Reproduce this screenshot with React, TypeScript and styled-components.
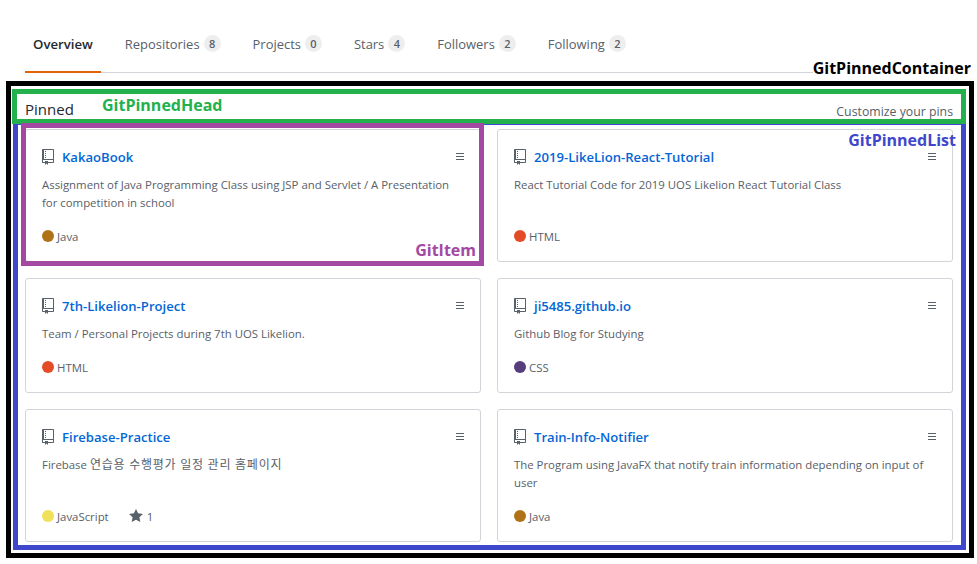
import React from 'react';
import styled, { createGlobalStyle } from 'styled-components';

const GlobalStyle = createGlobalStyle`
  html, body {
    margin: 0;
    background: #fff;
    font-family: "Open Sans", "Noto Sans CJK KR", sans-serif;
    color: #24292e;
  }
  * {
    box-sizing: border-box;
  }
`;

const Page = styled.div`
  width: 977px;
  height: 564px;
  overflow: hidden;
  padding-top: 17px;
`;

const Tabs = styled.nav`
  display: flex;
  margin: 0 24px 0 25px;
  height: 56px;
  border-bottom: 1px solid #d1d5da;
`;

const Tab = styled.a<{ $active?: boolean }>`
  display: flex;
  align-items: center;
  gap: 4px;
  height: 56px;
  padding: 0 8px 1px;
  margin-right: 16px;
  font-size: ${props => (props.$active ? '13.2px' : '12.95px')};
  font-weight: ${props => (props.$active ? 600 : 400)};
  color: ${props => (props.$active ? '#24292e' : '#586069')};
  border-bottom: 2px solid ${props => (props.$active ? '#e36209' : 'transparent')};
`;

const Counter = styled.span`
  min-width: 17px;
  height: 17px;
  padding: 0 5px;
  border-radius: 9px;
  background: #eeeeee;
  font-size: 11px;
  font-weight: 600;
  line-height: 17px;
  text-align: center;
  color: #586069;
`;

const GitPinnedContainer = styled.section`
  position: relative;
  width: 968px;
  height: 477px;
  margin: 8px 0 0 6px;
  padding: 3px 3px 3px 1px;
  border: 5px solid #000;
`;

const GitPinnedHead = styled.header`
  position: relative;
  display: flex;
  align-items: flex-end;
  justify-content: space-between;
  height: 35px;
  padding: 0 8px 0 8px;
  border: 5px solid #22b14c;
`;

const HeadTitle = styled.h2`
  margin: 0;
  font-size: 15px;
  font-weight: 400;
  line-height: 20px;
  color: #24292e;
`;

const CustomizeLink = styled.a`
  font-size: 12.3px;
  line-height: 14px;
  color: #586069;
`;

const GitPinnedList = styled.div`
  position: relative;
  display: grid;
  grid-template-columns: 456px 456px;
  gap: 16px;
  align-content: start;
  margin-left: 1px;
  height: 426px;
  padding: 4px 8px 0 7px;
  border: 5px solid #3f48cc;
  border-top-width: 1px;
`;

const GitItem = styled.article`
  position: relative;
  display: flex;
  flex-direction: column;
  padding: 17px 16px 16px;
  background: #fff;
  border: 1px solid #d1d5da;
  border-radius: 3px;
`;

const ItemHead = styled.div`
  display: flex;
  align-items: center;
  height: 20px;
`;

const RepoIcon = styled.svg`
  width: 12px;
  height: 16px;
  margin-right: 8px;
  fill: #586069;
`;

const RepoName = styled.a`
  flex: 1;
  font-size: 13.1px;
  font-weight: 600;
  color: #0366d6;
`;

const Grabber = styled.svg`
  width: 8px;
  height: 16px;
  fill: #586069;
`;

const Description = styled.p`
  margin: 9px 0 15px;
  font-size: 11.4px;
  line-height: 18px;
  color: #586069;
`;

const Hangul = styled.span`
  font-size: 12px;
  letter-spacing: 0.75px;
`;

const Meta = styled.div`
  display: flex;
  align-items: center;
  height: 18px;
  margin-top: auto;
  font-size: 11.4px;
  color: #586069;
`;

const LangDot = styled.span<{ $color: string }>`
  width: 12px;
  height: 12px;
  margin-right: 3px;
  border-radius: 50%;
  background: ${props => props.$color};
`;

const StarIcon = styled.svg`
  width: 14px;
  height: 16px;
  margin: 0 4px 0 20px;
  fill: #586069;
`;

const Annotation = styled.span<{ $color: string }>`
  position: absolute;
  font-size: 16px;
  font-weight: 700;
  line-height: 20px;
  white-space: nowrap;
  color: ${props => props.$color};
`;

const ContainerLabel = styled(Annotation)`
  top: -28px;
  right: -2px;
  background: #fff;
`;

const HeadLabel = styled(Annotation)`
  top: 1px;
  left: 85px;
`;

const ListLabel = styled(Annotation)`
  top: 5px;
  right: 5px;
  z-index: 1;
`;

const ItemFrame = styled.div`
  position: absolute;
  top: -7px;
  left: -5px;
  right: -4px;
  bottom: -5px;
  border: 5px solid #a349a4;
  pointer-events: none;
`;

const ItemLabel = styled(Annotation)`
  right: 3px;
  bottom: 1px;
`;

type Repo = {
  name: string;
  description: React.ReactNode;
  language: string;
  color: string;
  stars?: number;
};

const repos: Repo[] = [
  {
    name: 'KakaoBook',
    description:
      'Assignment of Java Programming Class using JSP and Servlet / A Presentation for competition in school',
    language: 'Java',
    color: '#b07219',
  },
  {
    name: '2019-LikeLion-React-Tutorial',
    description: 'React Tutorial Code for 2019 UOS Likelion React Tutorial Class',
    language: 'HTML',
    color: '#e34c26',
  },
  {
    name: '7th-Likelion-Project',
    description: 'Team / Personal Projects during 7th UOS Likelion.',
    language: 'HTML',
    color: '#e34c26',
  },
  {
    name: 'ji5485.github.io',
    description: 'Github Blog for Studying',
    language: 'CSS',
    color: '#563d7c',
  },
  {
    name: 'Firebase-Practice',
    description: (
      <>
        Firebase <Hangul>연습용 수행평가 일정 관리 홈페이지</Hangul>
      </>
    ),
    language: 'JavaScript',
    color: '#f1e05a',
    stars: 1,
  },
  {
    name: 'Train-Info-Notifier',
    description:
      'The Program using JavaFX that notify train information depending on input of user',
    language: 'Java',
    color: '#b07219',
  },
];

const tabs = [
  { label: 'Overview' },
  { label: 'Repositories', count: 8 },
  { label: 'Projects', count: 0 },
  { label: 'Stars', count: 4 },
  { label: 'Followers', count: 2 },
  { label: 'Following', count: 2 },
];

export default function App() {
  return (
    <Page>
      <GlobalStyle />
      <Tabs>
        {tabs.map((tab, i) => (
          <Tab key={tab.label} $active={i === 0}>
            {tab.label}
            {tab.count !== undefined && <Counter>{tab.count}</Counter>}
          </Tab>
        ))}
      </Tabs>
      <GitPinnedContainer>
        <ContainerLabel $color="#000">GitPinnedContainer</ContainerLabel>
        <GitPinnedHead>
          <HeadTitle>Pinned</HeadTitle>
          <HeadLabel $color="#22b14c">GitPinnedHead</HeadLabel>
          <CustomizeLink>Customize your pins</CustomizeLink>
        </GitPinnedHead>
        <GitPinnedList>
          <ListLabel $color="#3f48cc">GitPinnedList</ListLabel>
          {repos.map((repo, i) => (
            <GitItem key={repo.name}>
              <ItemHead>
                <RepoIcon viewBox="0 0 12 16">
                  <path d="M4 9H3V8h1v1zm0-3H3v1h1V6zm0-2H3v1h1V4zm0-2H3v1h1V2zm8-1v12c0 .55-.45 1-1 1H6v2l-1.5-1.5L3 16v-2H1c-.55 0-1-.45-1-1V1c0-.55.45-1 1-1h10c.55 0 1 .45 1 1zm-1 10H1v2h2v-1h3v1h5v-2zm0-10H2v9h9V1z" />
                </RepoIcon>
                <RepoName>{repo.name}</RepoName>
                <Grabber viewBox="0 0 8 16">
                  <path d="M8 4v1H0V4h8zM0 8h8V7H0v1zm0 3h8v-1H0v1z" />
                </Grabber>
              </ItemHead>
              <Description>{repo.description}</Description>
              <Meta>
                <LangDot $color={repo.color} />
                {repo.language}
                {repo.stars !== undefined && (
                  <>
                    <StarIcon viewBox="0 0 14 16">
                      <path d="M14 6l-4.9-.64L7 1 4.9 5.36 0 6l3.6 3.26L2.67 14 7 11.67 11.33 14l-.93-4.74L14 6z" />
                    </StarIcon>
                    {repo.stars}
                  </>
                )}
              </Meta>
              {i === 0 && (
                <ItemFrame>
                  <ItemLabel $color="#a349a4">GitItem</ItemLabel>
                </ItemFrame>
              )}
            </GitItem>
          ))}
        </GitPinnedList>
      </GitPinnedContainer>
    </Page>
  );
}
